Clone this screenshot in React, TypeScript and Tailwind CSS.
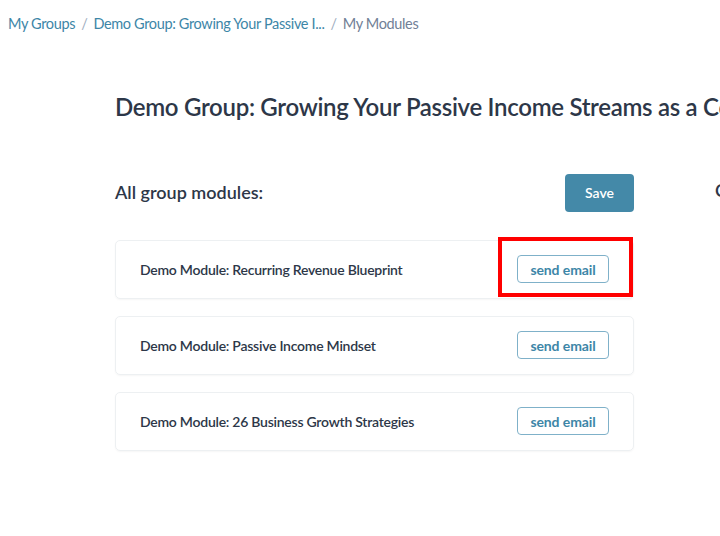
const modules = [
  'Demo Module: Recurring Revenue Blueprint',
  'Demo Module: Passive Income Mindset',
  'Demo Module: 26 Business Growth Strategies',
]

export default function App() {
  return (
    <div className="w-[720px] h-[536px] overflow-hidden bg-white text-[#2d3748]" style={{ fontFamily: 'Lato, "Open Sans", sans-serif' }}>
      {/* Breadcrumb */}
      <nav className="flex items-center gap-[6px] px-2 pt-[13px] text-[14.5px] tracking-[-0.35px] text-[#3d86a7] whitespace-nowrap">
        <span>My Groups</span>
        <span className="text-[#a0aec0]">/</span>
        <span>Demo Group: Growing Your Passive I...</span>
        <span className="text-[#a0aec0]">/</span>
        <span className="text-[#718096]">My Modules</span>
      </nav>

      <div className="pl-[115px] pt-[54px]">
        <h1 className="text-[24px] font-semibold whitespace-nowrap tracking-[-0.3px]">
          Demo Group: Growing Your Passive Income Streams as a Course Creator
        </h1>

        <div className="flex mt-[49px]">
          <div className="w-[519px] shrink-0">
            <div className="flex items-center justify-between">
              <h2 className="text-[18px] font-semibold">All group modules:</h2>
              <button className="w-[69px] h-[38px] rounded-[4px] bg-[#4489a8] text-white text-[14px] font-semibold">
                Save
              </button>
            </div>

            <div className="mt-[28px] flex flex-col gap-[17px]">
              {modules.map((m, i) => (
                <div
                  key={m}
                  className="relative h-[59px] rounded-[5px] border border-[#edf0f2] shadow-[0_1px_2px_rgba(0,0,0,0.04)] flex items-center justify-between pl-[24px] pr-[24px]"
                >
                  <span className="text-[14px] font-semibold tracking-[-0.25px] text-[#2d3748]">{m}</span>
                  <button className="w-[92px] h-[28px] rounded-[4px] border border-[#7fb1c9] text-[#3d86a7] text-[14px] font-bold tracking-[-0.1px]">
                    send email
                  </button>
                  {i === 0 && (
                    <div className="absolute left-[382px] top-[-4px] w-[135px] h-[60px] border-[4px] border-[#ff0000] pointer-events-none" />
                  )}
                </div>
              ))}
            </div>
          </div>

          <div className="ml-[81px] pt-[3px] shrink-0">
            <h2 className="text-[18px] font-semibold whitespace-nowrap">Completed modules</h2>
          </div>
        </div>
      </div>
    </div>
  )
}
